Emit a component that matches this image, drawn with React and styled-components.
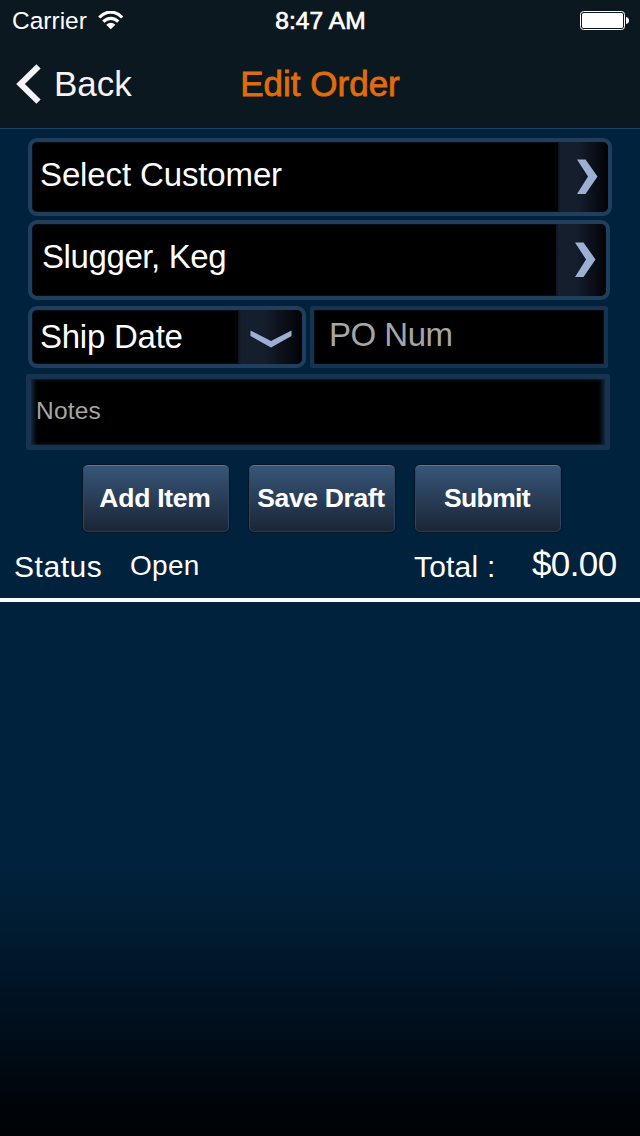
import React from "react";
import styled, { createGlobalStyle } from "styled-components";

const GlobalStyle = createGlobalStyle`
  * { box-sizing: border-box; }
  body { margin: 0; background: #00223c; }
`;

const Screen = styled.main`
  width: 640px;
  height: 1136px;
  overflow: hidden;
  color: #fff;
  font-family: "Liberation Sans", Arial, sans-serif;
  background: linear-gradient(#00223d 0, #00223d 862px, #001c31 930px, #00162a 968px, #000d18 1040px, #000408 1110px, #000306 1136px);
`;

const Header = styled.header`
  height: 129px;
  background: #0b1820;
  border-bottom: 1px solid #1f4260;
`;

const StatusBar = styled.div`
  display: grid;
  grid-template-columns: 1fr auto 1fr;
  align-items: center;
  height: 42px;
  padding: 0 11px 0 12px;
`;

const Carrier = styled.div`
  display: flex;
  align-items: center;
  gap: 10px;
`;

const Text = styled.span`
  display: block;
  white-space: pre;
  font-size: ${(p) => p.$size}px;
  line-height: ${(p) => p.$line || 40}px;
  letter-spacing: ${(p) => p.$track || 0}px;
  color: ${(p) => p.$color || "inherit"};
  -webkit-text-stroke: ${(p) => p.$stroke || 0}px currentColor;
`;

const Battery = styled.svg`
  justify-self: end;
  margin-bottom: 1px;
`;

const NavBar = styled.nav`
  display: grid;
  grid-template-columns: 1fr auto 1fr;
  align-items: center;
  height: 84px;
  padding: 0 16px;
`;

const BackButton = styled.button`
  display: flex;
  align-items: center;
  gap: 13px;
  padding: 0;
  border: 0;
  background: none;
  color: #f5f3f5;
  font-family: inherit;
`;

const Form = styled.form`
  display: flex;
  flex-direction: column;
  padding: 9px 0 0 28px;
`;

const Picker = styled.button`
  display: flex;
  align-items: stretch;
  justify-content: space-between;
  width: ${(p) => p.$width}px;
  height: ${(p) => p.$height}px;
  margin-bottom: ${(p) => p.$after || 0}px;
  padding: 0 0 0 ${(p) => p.$inset}px;
  overflow: hidden;
  border: 4px solid #213f5c;
  border-radius: 9px;
  background: #000;
  box-shadow: inset 0 0 1px 1px #06101a;
  color: #fff;
  font-family: inherit;
`;

const PickerArrow = styled.span`
  display: flex;
  align-items: center;
  justify-content: center;
  width: ${(p) => p.$width}px;
  padding-left: ${(p) => p.$nudge || 0}px;
  padding-top: ${(p) => p.$drop || 0}px;
  border-radius: 0 6px 6px 0;
  background: linear-gradient(90deg, #0c121b 0, #151e2c 5%, #151e2d 40%, #0a0f19 72%, #020306 100%);
`;

const FieldRow = styled.div`
  display: flex;
  gap: 4px;
  margin-bottom: 6px;
`;

const Entry = styled.div`
  width: ${(p) => p.$width}px;
  height: ${(p) => p.$height}px;
  margin-left: ${(p) => p.$shift || 0}px;
  padding-left: ${(p) => p.$inset}px;
  border-style: solid;
  border-color: #17334f;
  border-width: ${(p) => p.$edge};
  border-radius: 2px;
  background: #000;
  box-shadow: inset ${(p) => p.$soft}px 0 ${(p) => p.$soft}px -1px #14293f,
    inset -${(p) => p.$soft}px 0 ${(p) => p.$soft}px -1px #14293f,
    inset 0 0 2px 0 #14293f;
`;

const Actions = styled.div`
  display: flex;
  gap: 18px;
  margin: 14px 0 0 54px;
`;

const ActionButton = styled.button`
  display: flex;
  align-items: center;
  justify-content: center;
  width: 148px;
  height: 69px;
  padding: 0 2px 1px 0;
  border: 1px solid #051524;
  border-radius: 6px;
  background: linear-gradient(#38567a, #1a2534);
  box-shadow: inset 0 1px 0 #5b7693, inset 0 -1px 0 #303a49, inset 1px 0 0 #304761, inset -1px 0 0 #304761;
  color: #fff;
  font-family: inherit;
  font-weight: 700;
`;

const Summary = styled.section`
  display: flex;
  align-items: flex-start;
  height: 69px;
  padding: 11px 0 0 14px;
  border-bottom: 4px solid #fff;
`;

const SummaryCell = styled.div`
  width: ${(p) => p.$width}px;
  padding-top: ${(p) => p.$drop || 0}px;
`;

function RightArrow() {
  return (
    <svg width="22" height="36" viewBox="0 0 22 36" fill="#9bb0d2">
      <path d="M1 .5H9.500L21.500 17.500 9.500 35H1L12 17.500Z" />
    </svg>
  );
}

function DownArrow() {
  return (
    <svg width="42" height="18" viewBox="0 0 42 18" fill="#9bb0d2">
      <path d="M.5 .5 21 11 41.500 .5V6L21 17.500 .5 6Z" />
    </svg>
  );
}

export default function App() {
  return (
    <Screen>
      <GlobalStyle />
      <Header>
        <StatusBar>
          <Carrier>
            <Text $size={24.5} $line={42}>Carrier</Text>
            <svg width="28" height="20" viewBox="0 0 28 20" fill="none" stroke="#fff" strokeWidth="3.2">
              <path d="M2.300 6.500C9-.7 18.500-.7 25.200 6.500M6.300 10.700C10.600 6.300 17 6.300 21.300 10.700" />
              <path d="M9.200 13.800Q13.800 9.900 18.400 13.800L13.800 18.200Z" fill="#fff" stroke="none" />
            </svg>
          </Carrier>
          <Text $size={24.5} $line={42} $stroke={0.7} $track={0.1}>8:47 AM</Text>
          <Battery width="49" height="19" viewBox="0 0 49 19" fill="none">
            <rect x=".5" y=".5" width="44" height="18" rx="3" stroke="#fff" />
            <rect x="2" y="2" width="41" height="15" rx="1.500" fill="#fff" />
            <path d="M46 6Q49 6.500 49 9.500T46 13Z" fill="#fff" />
          </Battery>
        </StatusBar>
        <NavBar>
          <BackButton>
            <svg width="25" height="40" viewBox="0 0 25 40" fill="none" stroke="#f5f3f5" strokeWidth="6">
              <path d="M22.500 2.300 4.500 20 22.500 37.700" />
            </svg>
            <Text $size={35}>Back</Text>
          </BackButton>
          <Text $size={35} $stroke={0.8} $color="#e16c0b">Edit Order</Text>
        </NavBar>
      </Header>

      <Form>
        <Picker type="button" $width={584} $height={78} $inset={8} $after={4}>
          <Text $size={33} $line={66} $track={-0.13}>Select Customer</Text>
          <PickerArrow $width={50} $nudge={8}><RightArrow /></PickerArrow>
        </Picker>
        <Picker type="button" $width={582} $height={80} $inset={10} $after={6}>
          <Text $size={33} $line={66} $track={-0.4}>Slugger, Keg</Text>
          <PickerArrow $width={50} $nudge={8}><RightArrow /></PickerArrow>
        </Picker>
        <FieldRow>
          <Picker type="button" $width={278} $height={62} $inset={8}>
            <Text $size={33} $line={53} $track={-0.25}>Ship Date</Text>
            <PickerArrow $width={64} $nudge={2} $drop={3}><DownArrow /></PickerArrow>
          </Picker>
          <Entry $width={298} $height={62} $edge="4px" $inset={15} $soft={1}>
            <Text $size={33} $line={50} $track={-0.5} $color="#a6a6a6">PO Num</Text>
          </Entry>
        </FieldRow>
        <Entry $width={584} $height={76} $shift={-2} $edge="5px 5px" $inset={5} $soft={4}>
          <Text $size={24.5} $line={63} $track={0.2} $color="#a6a6a6">Notes</Text>
        </Entry>
        <Actions>
          <ActionButton type="button"><Text $size={26.5} $track={-0.25}>Add Item</Text></ActionButton>
          <ActionButton type="button"><Text $size={26.5} $track={-0.35}>Save Draft</Text></ActionButton>
          <ActionButton type="button"><Text $size={26.5} $track={-0.6}>Submit</Text></ActionButton>
        </Actions>
      </Form>

      <Summary>
        <SummaryCell $width={116} $drop={3}><Text $size={30} $track={0.55}>Status</Text></SummaryCell>
        <SummaryCell $width={284} $drop={2}><Text $size={28} $track={0.3}>Open</Text></SummaryCell>
        <SummaryCell $width={118} $drop={3}><Text $size={30} $track={0.2}>Total :</Text></SummaryCell>
        <SummaryCell><Text $size={35} $track={-0.6}>$0.00</Text></SummaryCell>
      </Summary>
    </Screen>
  );
}
